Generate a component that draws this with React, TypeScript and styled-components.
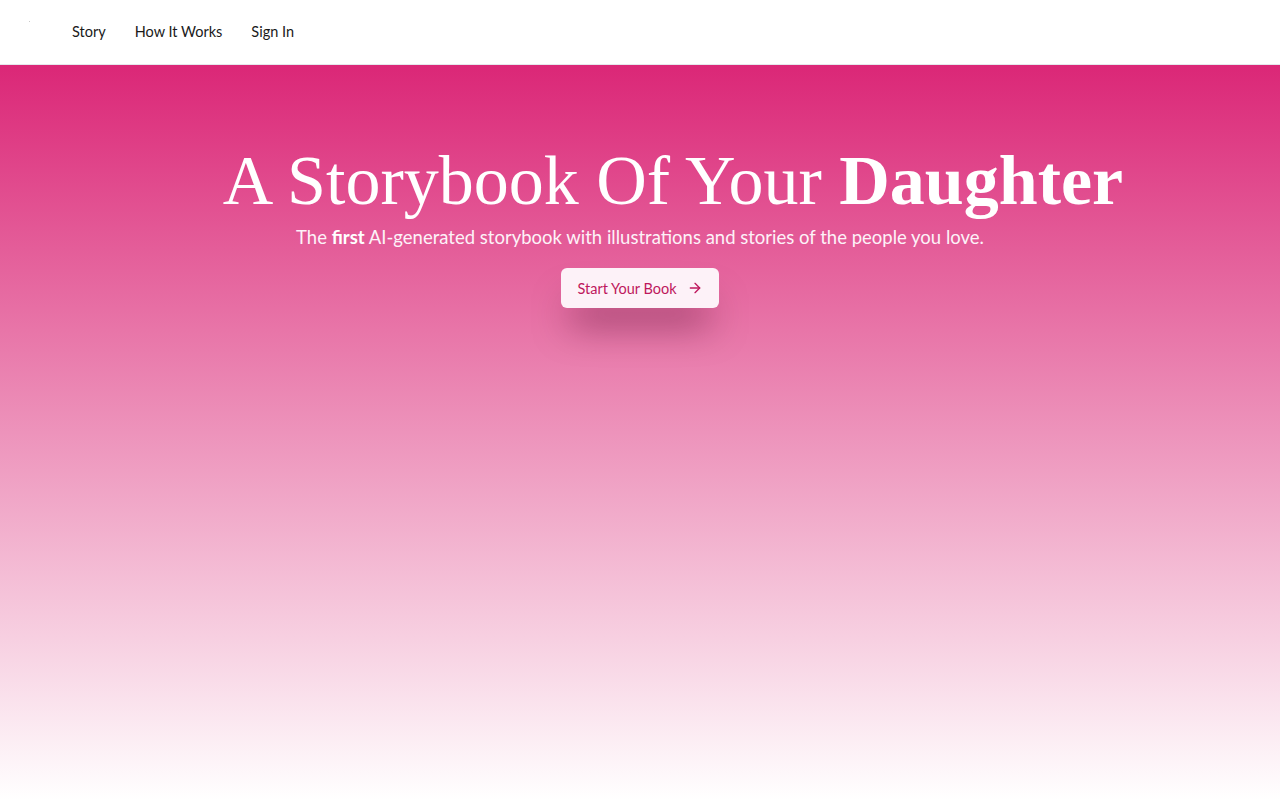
import React from 'react'
import styled, { createGlobalStyle } from 'styled-components'

const GlobalStyle = createGlobalStyle`
    * {
        box-sizing: border-box;
    }
    html, body {
        margin: 0;
        padding: 0;
    }
    body {
        font-family: Lato, 'Noto Sans', sans-serif;
        background: #ffffff;
    }
`

const ArrowRight = () => (
    <svg
        width="16"
        height="16"
        viewBox="0 0 24 24"
        fill="none"
        stroke="currentColor"
        strokeWidth="2"
        strokeLinecap="round"
        strokeLinejoin="round"
    >
        <path d="M5 12h14" />
        <path d="m12 5 7 7-7 7" />
    </svg>
)

export default function App(): JSX.Element {
    return (
        <>
            <GlobalStyle />
            <Page>
                <Header>
                    <Logo />
                    <Nav>
                        <NavLink href="#story">Story</NavLink>
                        <NavLink href="#how">How It Works</NavLink>
                        <NavLink href="#signin">Sign In</NavLink>
                    </Nav>
                </Header>
                <Hero>
                    <Title>
                        A Storybook Of Your <strong>Daughter</strong>
                    </Title>
                    <Subtitle>
                        The <strong>first</strong> AI-generated storybook with
                        illustrations and stories of the people you love.
                    </Subtitle>
                    <StartButton>
                        Start Your Book
                        <ArrowRight />
                    </StartButton>
                </Hero>
            </Page>
        </>
    )
}

const Page = styled.div`
    min-height: 800px;
    display: flex;
    flex-direction: column;
`

const Header = styled.header`
    height: 65px;
    display: flex;
    align-items: center;
    padding-left: 29px;
    background: #ffffff;
    border-bottom: 1px solid #e5e7eb;
`

const Logo = styled.span`
    width: 1px;
    height: 1px;
    background: #c9c9c9;
    margin-top: -22px;
`

const Nav = styled.nav`
    display: flex;
    gap: 29px;
    margin-left: 42px;
    margin-top: -2px;
`

const NavLink = styled.a`
    font-size: 14.5px;
    color: #1a1a1a;
    text-decoration: none;
`

const Hero = styled.main`
    flex: 1;
    display: flex;
    flex-direction: column;
    align-items: center;
    padding-top: 76px;
    background: linear-gradient(to bottom, #db2777, #ffffff);
`

const Title = styled.h1`
    margin: 0 0 0 66px;
    font-family: 'Liberation Serif', 'DejaVu Serif', serif;
    font-weight: 400;
    font-size: 70px;
    line-height: 80px;
    color: #ffffff;
    white-space: nowrap;

    strong {
        font-weight: 700;
    }
`

const Subtitle = styled.p`
    margin: 2px 0 0;
    font-size: 18.5px;
    line-height: 28px;
    color: #fdf2f8;

    strong {
        font-weight: 700;
        color: #ffffff;
    }
`

const StartButton = styled.button`
    margin-top: 17px;
    display: flex;
    align-items: center;
    gap: 10px;
    height: 40px;
    padding: 0 16px 0 16px;
    border: none;
    border-radius: 6px;
    background: #fdf2f8;
    color: #be185d;
    font-family: Lato, 'Noto Sans', sans-serif;
    font-size: 14.5px;
    cursor: pointer;
    box-shadow: 0 26px 36px -10px rgba(60, 0, 30, 0.5);
`
